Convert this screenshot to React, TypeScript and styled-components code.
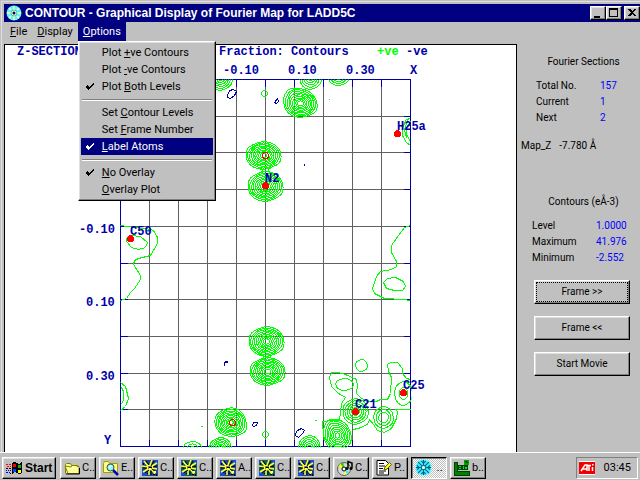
import React from "react";
import styled, { createGlobalStyle, css } from "styled-components";

const FACE = "#c0c0c0";
const NAVY = "#000080";
const AXIS = "#0000a8";
const GREEN = "#00ff00";
const RED = "#ff0000";
const UI_FONT = 'Roboto, "Liberation Sans", Arial, sans-serif';
const BOLD_FONT = '"Liberation Sans", Arial, sans-serif';

const GlobalStyle = createGlobalStyle`
  * { box-sizing: border-box; }
  body { margin: 0; background: ${FACE}; font-family: ${UI_FONT}; color: #000; }
  button { font-family: inherit; color: inherit; }
`;

const raised = css`
  border: 1px solid;
  border-color: #fff #000 #000 #fff;
  box-shadow: inset -1px -1px 0 #808080, inset 1px 1px 0 #dfdfdf;
`;

const Desktop = styled.div`
  display: flex;
  flex-direction: column;
  min-height: 100vh;
  background: ${FACE};
`;

const AppWindow = styled.div`
  flex: 1;
  display: flex;
  flex-direction: column;
  padding: 2px 0 0 2px;
  border: 1px solid #dfdfdf;
  border-width: 1px 0 0 1px;
  margin: 1px 0 0 1px;
`;

const TitleBar = styled.header`
  display: flex;
  align-items: center;
  height: 18px;
  padding: 0 0 0 2px;
  gap: 3px;
  background: ${NAVY};
  color: #fff;
`;

const TitleText = styled.h1`
  flex: 1;
  margin: 0;
  font-family: ${BOLD_FONT};
  font-size: 12px;
  line-height: 18px;
  font-weight: bold;
  white-space: nowrap;
`;

const CaptionButtons = styled.div`
  display: flex;
`;

const CaptionButton = styled.button<{ $gap?: boolean }>`
  ${raised}
  display: flex;
  width: 16px;
  height: 14px;
  padding: 0;
  margin-left: ${(p) => (p.$gap ? 2 : 0)}px;
  background: ${FACE};
`;

const MenuBar = styled.nav`
  display: flex;
  height: 22px;
  padding: 0 0 3px 1px;
`;

const MenuHolder = styled.div`
  position: relative;
  display: flex;
`;

const MenuTitle = styled.button<{ $open?: boolean }>`
  border: 0;
  padding: 0 5px;
  font-size: 11px;
  line-height: 19px;
  background: ${(p) => (p.$open ? NAVY : "transparent")};
  color: ${(p) => (p.$open ? "#fff" : "#000")};
`;

const Menu = styled.div`
  ${raised}
  position: absolute;
  top: 19px;
  left: 0;
  z-index: 2;
  width: 138px;
  padding: 2px;
  background: ${FACE};
`;

const MenuItem = styled.button<{ $active?: boolean }>`
  display: grid;
  grid-template-columns: 21px 1fr;
  align-items: center;
  width: 100%;
  height: 17px;
  border: 0;
  padding: 0;
  font-size: 11px;
  line-height: 17px;
  text-align: left;
  white-space: nowrap;
  background: ${(p) => (p.$active ? NAVY : "transparent")};
  color: ${(p) => (p.$active ? "#fff" : "#000")};
`;

const MenuRule = styled.hr`
  height: 2px;
  margin: 4px 1px 3px;
  border: 0;
  border-top: 1px solid #808080;
  border-bottom: 1px solid #fff;
`;

const Workspace = styled.main`
  flex: 1;
  display: flex;
`;

const PlotPanel = styled.section`
  flex: 1;
  min-width: 0;
  border: 1px solid #000;
  border-bottom: 0;
  background: #fff;
`;

const PlotDrawing = styled.svg`
  display: block;
  width: 100%;
  height: auto;
`;

const Sidebar = styled.aside`
  display: flex;
  flex-direction: column;
  width: 123px;
  padding: 10px 10px 0 4px;
  font-size: 10px;
`;

const GroupTitle = styled.h2`
  margin: 0;
  padding-left: 16px;
  font-size: 10px;
  line-height: 16px;
  font-weight: normal;
  text-align: center;
  white-space: nowrap;
`;

const Facts = styled.dl<{ $indent: number }>`
  display: grid;
  grid-template-columns: 64px 1fr;
  margin: 8px 0 0;
  padding-left: ${(p) => p.$indent}px;
  line-height: 16px;
  dt { margin: 0; }
  dd { margin: 0; color: #0000ff; }
`;

const MapLevel = styled.p`
  display: flex;
  gap: 8px;
  margin: 12px 0 40px;
  line-height: 16px;
`;

const Actions = styled.div`
  display: flex;
  flex-direction: column;
  gap: 12px;
  margin: 14px 0 0 13px;
`;

const ActionButton = styled.button<{ $focused?: boolean }>`
  ${raised}
  height: 24px;
  padding: 1px;
  font-size: 10px;
  background: ${FACE};
  span {
    display: block;
    line-height: 18px;
    border: 1px dotted ${(p) => (p.$focused ? "#000" : "transparent")};
  }
`;

const TaskBar = styled.footer`
  display: flex;
  align-items: center;
  gap: 3px;
  height: 28px;
  padding: 2px 2px 0;
  border-top: 1px solid #fff;
  background: ${FACE};
`;

const TaskButton = styled.button<{ $pressed?: boolean }>`
  ${raised}
  display: flex;
  align-items: center;
  gap: 2px;
  width: 36px;
  height: 22px;
  padding: 0 0 0 3px;
  overflow: hidden;
  font-size: 11px;
  white-space: nowrap;
  background: ${FACE};
  svg { flex: none; }
  ${(p) =>
    p.$pressed &&
    css`
      border-color: #000 #fff #fff #000;
      box-shadow: inset 1px 1px 0 #808080;
      background: repeating-conic-gradient(#fff 0 25%, ${FACE} 0 50%) 0 0 / 2px 2px;
    `}
`;

const StartButton = styled(TaskButton)`
  width: 54px;
  margin-right: 1px;
  font-family: ${BOLD_FONT};
  font-size: 12px;
  font-weight: bold;
`;

const Tray = styled.div`
  display: flex;
  align-items: center;
  justify-content: space-between;
  width: 62px;
  height: 22px;
  margin-left: auto;
  padding: 0 6px 0 2px;
  border: 1px solid;
  border-color: #808080 #fff #fff #808080;
  font-size: 11px;
`;

/* ---------- icons ---------- */

const DiscIcon = () => (
  <svg width="16" height="16" viewBox="0 0 16 16" aria-hidden="true">
    <circle cx="8" cy="8" r="7.500" fill="#60f0ff" />
    <g stroke="#ffffa0" strokeWidth="1.500">
      <path d="M8 1v4M8 11v4M1 8h4M11 8h4M3 3l2 2M11 11l2 2M13 3l-2 2M3 13l2-2" />
    </g>
    <circle cx="8" cy="8" r="3" fill="#ffffa0" stroke="#40c0d0" />
    <circle cx="8" cy="8" r="1.500" fill={NAVY} />
  </svg>
);

const CheckMark = () => (
  <svg width="21" height="9" viewBox="0 0 21 9" aria-hidden="true" shapeRendering="crispEdges">
    <path d="M6 3h1v1h1v1h1v-1h1v-1h1v-1h1v-1h1v2h-1v1h-1v1h-1v1h-1v1h-1v1h-1v-1h-1v-1h-1z" fill="currentColor" />
  </svg>
);

const StartIcon = () => (
  <svg width="17" height="16" viewBox="0 0 17 16" aria-hidden="true" shapeRendering="crispEdges">
    <path d="M6 3q3-2 5 0t5-1v11q-3 2-5 0t-5 1z" fill="#000" />
    <path d="M7 4q2-1 3 0v3.500q-2-1-3 0z" fill={RED} />
    <path d="M12 5q2 1 3 0v3q-2 1-3 0z" fill="#00c000" />
    <path d="M7 9q2-1 3 0v3q-2-1-3 0z" fill="#0040ff" />
    <path d="M12 10q2 1 3 0v3q-2 1-3 0z" fill="#ffff00" />
    <path d="M0 4h2M3 4h2M1 6h2M4 6h1" stroke={RED} />
    <path d="M0 8h2M3 8h2M4 10h1M4 13h1" stroke="#000" />
    <path d="M0 10h1M2 10h1M0 12h2M3 12h1" stroke="#0000ff" />
  </svg>
);

const FolderIcon = () => (
  <svg width="16" height="16" viewBox="0 0 16 16" aria-hidden="true">
    <path d="M1.500 13.500v-9l1-1h4l1 2h6v3" fill="#ffff80" stroke="#808000" />
    <path d="M1 6l3 7.500h11v-7l-2 0v-1H8l-1 1.500z" fill="#ffff9c" stroke="#808000" />
    <path d="M2 14h13.500V8" fill="none" stroke="#000" />
  </svg>
);

const SearchFolderIcon = () => (
  <svg width="16" height="16" viewBox="0 0 16 16" aria-hidden="true">
    <path d="M.5 12.500v-9l1-2h4l1 2h8v9z" fill="#ffff80" stroke="#a0a000" />
    <path d="M10 10l5 5" stroke="#0000c0" strokeWidth="2.500" />
    <circle cx="7.500" cy="7.500" r="3.500" fill="#80ffff" stroke="#404040" />
    <path d="M6 8l2.500-2.500" stroke="#fff" strokeWidth="1.500" />
  </svg>
);

const CrystalIcon = ({ tint }: { tint: string }) => (
  <svg width="16" height="16" viewBox="0 0 16 16" aria-hidden="true">
    <path d="M0 0h16v16H0z" fill={tint} />
    <path d="M0 11h4v5H0zM13 0h3v4h-3zM0 0h2v3H0z" fill="#1050e0" />
    <g fill="none" stroke="#ffff30" strokeWidth="1.500">
      <path d="M2 1l4 5M10 0L8 5M15 3l-5 3M0 6l5 1M15 9l-5-1M1 12l5-3M13 14l-3-4M7 15V10" />
      <path d="M5.500 5.500h5v4h-5z" />
    </g>
    <g fill="none" stroke="#000">
      <path d="M4 1l3 4M12 1L9 6M1 8h4M11 7l4-1M3 13l4-3M9 11v4M14 12l-4-3M7 7.500h3" />
      <path d="M5 13.500h1M11 14.500h2M1.500 3v2M14.500 14v2" />
    </g>
    <path d="M7 8h2v1H7zM12 11h2v2h-2zM3 3h1v1H3z" fill="#ffff80" />
  </svg>
);

const CdPlayerIcon = () => (
  <svg width="16" height="16" viewBox="0 0 16 16" aria-hidden="true">
    <circle cx="7" cy="9" r="6.500" fill="#d8d8d8" stroke="#606060" />
    <path d="M7 9L1.500 6.500l2-3z" fill="#ffff00" />
    <path d="M7 9L3.500 3.500l3-1z" fill="#00e000" />
    <path d="M7 9l5 3-2 2z" fill="#00ffff" />
    <path d="M7 9l3 5-3 1z" fill="#ffff40" />
    <circle cx="7" cy="9" r="2" fill="#fff" stroke="#000" />
    <path d="M11 8V1.500l4 1.500v5" fill="none" stroke="#000" strokeWidth="1.500" />
    <circle cx="10" cy="8.500" r="1.500" />
    <circle cx="14" cy="8.500" r="1.500" />
  </svg>
);

const NotesIcon = () => (
  <svg width="16" height="16" viewBox="0 0 16 16" aria-hidden="true">
    <path d="M1 .5h8.500l3 3v11.500H1z" fill="#fff" stroke="#000" />
    <path d="M3 3.500h5M3 6h6M3 8.500h4M3 11h7M3 13h5" stroke="#000" />
    <path d="M8 10l1-3 4.500-4.500 2 2L11 9z" fill="#ffff00" stroke="#606000" />
  </svg>
);

const WheelIcon = () => (
  <svg width="17" height="17" viewBox="0 0 16 16" aria-hidden="true">
    <circle cx="8" cy="8" r="7.500" fill="#40f0ff" />
    <g fill="none" stroke="#006080" strokeWidth="1">
      <path d="M8 1v14M1 8h14M3 3l10 10M13 3L3 13" />
      <path d="M6 2l2 2 2-2M6 14l2-2 2 2M2 6l2 2-2 2M14 6l-2 2 2 2" />
    </g>
    <circle cx="8" cy="8" r="2" fill="#fff" stroke="#008090" />
  </svg>
);

const ChipIcon = () => (
  <svg width="16" height="16" viewBox="0 0 16 16" aria-hidden="true" shapeRendering="crispEdges">
    <path d="M0 2h3v9h12v4H0z" fill="#008000" stroke="#004000" />
    <path d="M4 5h10v5H4z" fill="#004000" />
    <path d="M10 0h5v5h-5z" fill="#00a000" />
    <path d="M5 6h2v1H5zM5 8h2v1H5zM9 6h1v3H9zM11 7h2v2h-2z" fill="#00e040" />
    <path d="M11 1h1v2M13 2h1" stroke="#004000" />
  </svg>
);

const AtiIcon = () => (
  <svg width="16" height="14" viewBox="0 0 16 14" aria-hidden="true">
    <path d="M0 0h16v14H0z" fill="#fff" />
    <path d="M0 1h16v12H0z" fill="#f00000" />
    <path d="M2 10l4-6h2v6M4 8h4M8 4.500h4M10 4.500V10M13.500 6v4" fill="none" stroke="#fff" strokeWidth="1.500" />
    <path d="M13 3h1.500v1.500H13z" fill="#fff" />
  </svg>
);

/* ---------- contour map ---------- */

type Peak = {
  cx: number;
  cy: number;
  rx: number;
  ry: number;
  rings: number;
  radii?: number[];
  inner?: number;
};

const ROUND = [1, 1.04, 1, 1.02, 1, 1.05, 0.98, 1.03, 1, 1.02, 1, 1.04];

function ringPath(p: Peak, scale: number, ring: number) {
  const radii = p.radii ?? ROUND;
  const n = radii.length;
  const pts = radii.map((r, i) => {
    const a = (i / n) * Math.PI * 2;
    const wobble = 1 + 0.03 * Math.sin(i * 2.1 + ring * 1.7);
    const k = (r * scale + (1 - scale) * scale * (1 - r)) * wobble;
    return [p.cx + Math.cos(a) * p.rx * k, p.cy + Math.sin(a) * p.ry * k];
  });
  const mid = (a: number[], b: number[]) => [(a[0] + b[0]) / 2, (a[1] + b[1]) / 2];
  const start = mid(pts[n - 1], pts[0]);
  let d = `M${start[0]} ${start[1]}`;
  pts.forEach((pt, i) => {
    const m = mid(pt, pts[(i + 1) % n]);
    d += `Q${pt[0]} ${pt[1]} ${m[0]} ${m[1]}`;
  });
  return d + "Z";
}

const ContourPeak = (p: Peak) => {
  const inner = p.inner ?? 0.18;
  return (
    <>
      {Array.from({ length: p.rings }, (_, i) => (
        <path key={i} d={ringPath(p, 1 - (i * (1 - inner)) / Math.max(1, p.rings - 1), i)} />
      ))}
    </>
  );
};

const CORNERED = [1, 1.08, 1.05, 1, 1.02, 1.02, 1.0, 1.12, 1.32, 1.08, 1, 0.98];
const LOWER_RIGHT = [1, 1.15, 1.1, 1, 1.0, 1.02, 1, 1.05, 1.05, 1.08, 1.06, 1.02];

const peaks: Peak[] = [
  { cx: 263, cy: 155, rx: 18, ry: 14, rings: 9 },
  { cx: 265, cy: 186, rx: 18, ry: 15, rings: 9 },
  { cx: 300, cy: 103, rx: 17, ry: 14, rings: 9, radii: CORNERED },
  { cx: 310, cy: 78, rx: 11, ry: 11, rings: 5 },
  { cx: 338, cy: 78, rx: 10, ry: 7, rings: 4 },
  { cx: 220, cy: 78, rx: 12, ry: 12, rings: 6 },
  { cx: 266, cy: 341, rx: 18, ry: 15, rings: 9 },
  { cx: 267, cy: 371, rx: 18, ry: 14, rings: 9 },
  { cx: 230, cy: 422, rx: 16, ry: 14, rings: 9, radii: LOWER_RIGHT },
  { cx: 192, cy: 447, rx: 9, ry: 6, rings: 3 },
  { cx: 220, cy: 447, rx: 11, ry: 10, rings: 6 },
  { cx: 309, cy: 447, rx: 11, ry: 12, rings: 6 },
  { cx: 337, cy: 435, rx: 14, ry: 15, rings: 8, radii: CORNERED },
  { cx: 355, cy: 411, rx: 13, ry: 13, rings: 5, inner: 0.3 },
  { cx: 383, cy: 417, rx: 10, ry: 11, rings: 3, inner: 0.5 },
  { cx: 403, cy: 393, rx: 9, ry: 12, rings: 2, inner: 0.5 },
  { cx: 344, cy: 384, rx: 9, ry: 6, rings: 1 },
  { cx: 361, cy: 365, rx: 6, ry: 6, rings: 1 },
  { cx: 265, cy: 434, rx: 3, ry: 3, rings: 1 },
  { cx: 264, cy: 93, rx: 3, ry: 3, rings: 1 },
];

const positiveLines = [
  "M259 167l3 2v2l-4 2M271 167l-3 2v2l4 2",
  "M258 353l5 2v2l-5 3M275 353l-5 2v2l5 3",
  "M120 225L127 226L133 227L146 228L153 230L157 237L157 243L150 255L138 258L134 260L133 264L140 275L140 279L134 288L130 292L126 298L120 300",
  "M126 238L130 235L140 236L147 242L145 247L138 249L131 247L126 241Z",
  "M410 225L404 227L398 235L391 245L391 252L396 261L396 266L391 269L380 271L376 276L372 288L374 293L384 298L402 299L410 300",
  "M383 282L387 278L395 277L403 281L405 286L402 290L394 290L386 288Z",
  "M410 117L405 120L402 128L402 135L406 142L410 145M410 121L406 127L406 134L410 141M408 118L404 129L406 138",
  "M120 382L125 386L128 398L125 406L120 410M121 387L123 391L123 399L121 404",
  "M322 428L322 421L333 420L339 420L341 403L345 397L338 393L331 386L329 377L331 372L338 372L345 374L356 379L357 385L356 393L360 397L366 401L376 401L380 399L387 399L390 393L391 377L388 371L387 364L390 362L397 362L402 368L402 373L406 378L410 379",
  "M353 429L361 427L368 423L369 419L373 424L377 430L384 432L391 428L396 418L397 411L395 409L410 409",
  "M328 99h1M314 420h2M200 426h2",
];

const negativeLines = [
  "M227 95L229 90L233 89L236 91L234 95L230 98L227 97Z",
  "M274 102L277 98L278 101L276 103Z",
  "M304 163v2",
  "M252 425L253 422L257 422L256 425L253 426Z",
  "M295 433L297 430L301 428L304 430L302 433L298 437L295 435Z",
  "M224 361h3v1h-3v3",
];

const atoms = [
  { x: 265, y: 185, label: "N2", lx: 265, ly: 182 },
  { x: 397, y: 133, label: "H25a", lx: 397, ly: 130 },
  { x: 130, y: 238, label: "C50", lx: 130, ly: 235 },
  { x: 355, y: 411, label: "C21", lx: 355, ly: 408 },
  { x: 403, y: 392, label: "C25", lx: 403, ly: 389 },
];

const gridX = [149, 178, 207, 236, 265, 294, 323, 352, 381];
const gridY = [116, 152, 189, 226, 263, 299, 336, 373, 409];

const ContourPlot = () => (
  <PlotDrawing viewBox="5 45 511 407" role="img" aria-label="Fourier map contour plot">
    <defs>
      <clipPath id="frame">
        <rect x="120" y="79" width="291" height="368" />
      </clipPath>
    </defs>
    <g transform="translate(.5 .5)" fill="none" shapeRendering="crispEdges">
      <path stroke="#606060" d={gridX.map((x) => `M${x} 79V446`).join("") + gridY.map((y) => `M120 ${y}H410`).join("")} />
      <rect x="120" y="79" width="290" height="367" stroke={AXIS} />
      <path
        stroke={AXIS}
        d={gridX.map((x) => `M${x} 79v7M${x} 446v-7`).join("") + gridY.map((y) => `M120 ${y}h7M410 ${y}h-7`).join("")}
      />
      <g stroke={GREEN} clipPath="url(#frame)">
        {peaks.map((p, i) => (
          <ContourPeak key={i} {...p} />
        ))}
        {positiveLines.map((d, i) => (
          <path key={i} d={d} />
        ))}
      </g>
      <g stroke={AXIS}>
        {negativeLines.map((d, i) => (
          <path key={i} d={d} />
        ))}
      </g>
      <g stroke={RED}>
        <circle cx="265" cy="155" r="3" />
        <circle cx="232" cy="422" r="3" />
      </g>
      <g fill={RED}>
        {atoms.map((a) => (
          <circle key={a.label} cx={a.x} cy={a.y} r="3.500" />
        ))}
      </g>
    </g>
    <g fill={AXIS} fontFamily='"Liberation Mono", "Courier New", monospace' fontWeight="bold" fontSize="12">
      <text x="17" y="55">Z-SECTION</text>
      <text x="219" y="55">Fraction: Contours</text>
      <text x="377" y="55" fill={GREEN}>+ve</text>
      <text x="406" y="55">-ve</text>
      <text x="223" y="74">-0.10</text>
      <text x="288" y="74">0.10</text>
      <text x="346" y="74">0.30</text>
      <text x="410" y="74">X</text>
      <text x="79" y="233">-0.10</text>
      <text x="86" y="306">0.10</text>
      <text x="86" y="380">0.30</text>
      <text x="104" y="444">Y</text>
      {atoms.map((a) => (
        <text key={a.label} x={a.lx} y={a.ly}>{a.label}</text>
      ))}
    </g>
  </PlotDrawing>
);

/* ---------- menus and bars ---------- */

type Entry = { before: string; key: string; after: string; checked?: boolean; active?: boolean };

const optionGroups: Entry[][] = [
  [
    { before: "Plot ", key: "+", after: "ve Contours" },
    { before: "Plot ", key: "-", after: "ve Contours" },
    { before: "Plot ", key: "B", after: "oth Levels", checked: true },
  ],
  [
    { before: "Set ", key: "C", after: "ontour Levels" },
    { before: "Set ", key: "F", after: "rame Number" },
    { before: "", key: "L", after: "abel Atoms", checked: true, active: true },
  ],
  [
    { before: "", key: "N", after: "o Overlay", checked: true },
    { before: "", key: "O", after: "verlay Plot" },
  ],
];

const OptionsMenu = () => (
  <Menu role="menu" aria-label="Options">
    {optionGroups.map((group, g) => (
      <React.Fragment key={g}>
        {g > 0 && <MenuRule />}
        {group.map((e) => (
          <MenuItem key={e.before + e.key} role="menuitemcheckbox" aria-checked={!!e.checked} $active={e.active}>
            {e.checked ? <CheckMark /> : <i />}
            <span>
              {e.before}
              <u>{e.key}</u>
              {e.after}
            </span>
          </MenuItem>
        ))}
      </React.Fragment>
    ))}
  </Menu>
);

const tasks = [
  { icon: <FolderIcon />, label: "C.." },
  { icon: <SearchFolderIcon />, label: "E.." },
  { icon: <CrystalIcon tint="#204890" />, label: "C.." },
  { icon: <CrystalIcon tint="#106060" />, label: "C.." },
  { icon: <CrystalIcon tint="#204890" />, label: "A.." },
  { icon: <CrystalIcon tint="#106060" />, label: "C.." },
  { icon: <CrystalIcon tint="#204890" />, label: "C.." },
  { icon: <CdPlayerIcon />, label: "C.." },
  { icon: <NotesIcon />, label: "P.." },
  { icon: <WheelIcon />, label: "\u00a0..", pressed: true },
  { icon: <ChipIcon />, label: "b.." },
];

export default function App() {
  return (
    <Desktop>
      <GlobalStyle />
      <AppWindow>
        <TitleBar>
          <DiscIcon />
          <TitleText>CONTOUR - Graphical Display of Fourier Map for LADD5C</TitleText>
          <CaptionButtons>
            <CaptionButton aria-label="Minimize">
              <svg width="14" height="12" shapeRendering="crispEdges"><path d="M3 9h6v2H3z" /></svg>
            </CaptionButton>
            <CaptionButton aria-label="Maximize">
              <svg width="14" height="12" shapeRendering="crispEdges">
                <path d="M2 1h9v9H2zM3 3v6h7V3z" fillRule="evenodd" />
              </svg>
            </CaptionButton>
            <CaptionButton aria-label="Close" $gap>
              <svg width="14" height="12" shapeRendering="crispEdges">
                <path d="M3 2h2l2 2 2-2h2L8 5.500 11 9H9L7 7 5 9H3l3-3.500z" />
              </svg>
            </CaptionButton>
          </CaptionButtons>
        </TitleBar>
        <MenuBar>
          <MenuTitle><u>F</u>ile</MenuTitle>
          <MenuTitle><u>D</u>isplay</MenuTitle>
          <MenuHolder>
            <MenuTitle $open aria-expanded="true"><u>O</u>ptions</MenuTitle>
            <OptionsMenu />
          </MenuHolder>
        </MenuBar>
        <Workspace>
          <PlotPanel>
            <ContourPlot />
          </PlotPanel>
          <Sidebar>
            <GroupTitle>Fourier Sections</GroupTitle>
            <Facts $indent={15}>
              <dt>Total No.</dt><dd>157</dd>
              <dt>Current</dt><dd>1</dd>
              <dt>Next</dt><dd>2</dd>
            </Facts>
            <MapLevel><span>Map_Z</span><span>-7.780 Å</span></MapLevel>
            <GroupTitle>Contours (eÅ-3)</GroupTitle>
            <Facts $indent={11}>
              <dt>Level</dt><dd>1.0000</dd>
              <dt>Maximum</dt><dd>41.976</dd>
              <dt>Minimum</dt><dd>-2.552</dd>
            </Facts>
            <Actions>
              <ActionButton $focused><span>Frame &gt;&gt;</span></ActionButton>
              <ActionButton><span>Frame &lt;&lt;</span></ActionButton>
              <ActionButton><span>Start Movie</span></ActionButton>
            </Actions>
          </Sidebar>
        </Workspace>
      </AppWindow>
      <TaskBar>
        <StartButton><StartIcon />Start</StartButton>
        {tasks.map((t, i) => (
          <TaskButton key={i} $pressed={t.pressed}>
            {t.icon}
            {t.label}
          </TaskButton>
        ))}
        <Tray><AtiIcon /><span>03:45</span></Tray>
      </TaskBar>
    </Desktop>
  );
}
